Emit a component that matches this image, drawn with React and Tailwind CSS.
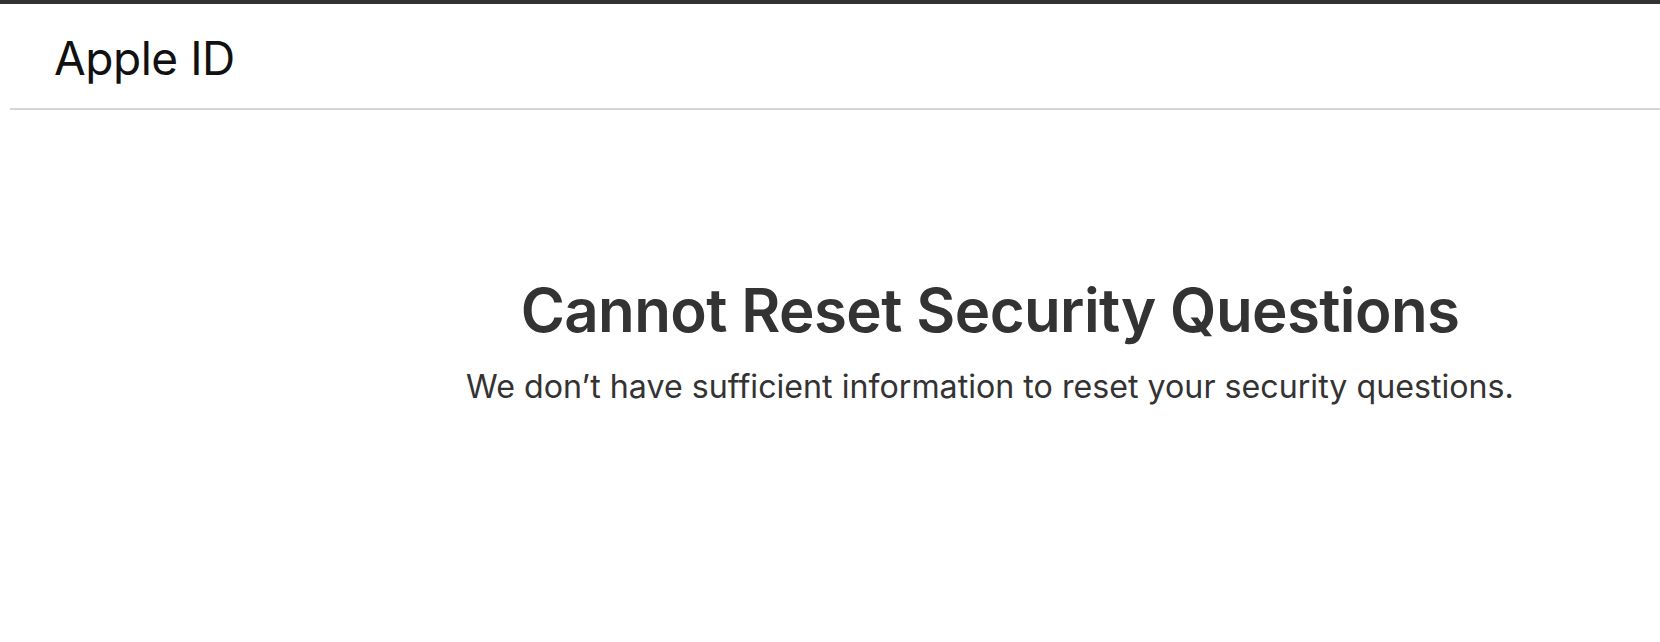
export default function App() {
  return (
    <div className="min-h-[642px] bg-white text-[#333]" style={{ fontFamily: 'Inter, "Noto Sans", sans-serif' }}>
      <div className="h-1 bg-[#333]" />
      <header className="ml-[10px] h-[106px] border-b-2 border-[#d6d6d6] flex items-center pl-[44px]">
        <h1 className="text-[46px] leading-none text-[#111] font-normal tracking-[-0.01em] mt-[4px]">Apple ID</h1>
      </header>
      <main className="pl-[320px]">
        <div className="flex flex-col items-center pt-[170px]">
          <h2 className="text-[60px] leading-none font-semibold tracking-[-0.01em]">Cannot Reset Security Questions</h2>
          <p className="mt-[31px] text-[32.2px] leading-none">We don’t have sufficient information to reset your security questions.</p>
        </div>
      </main>
    </div>
  )
}
